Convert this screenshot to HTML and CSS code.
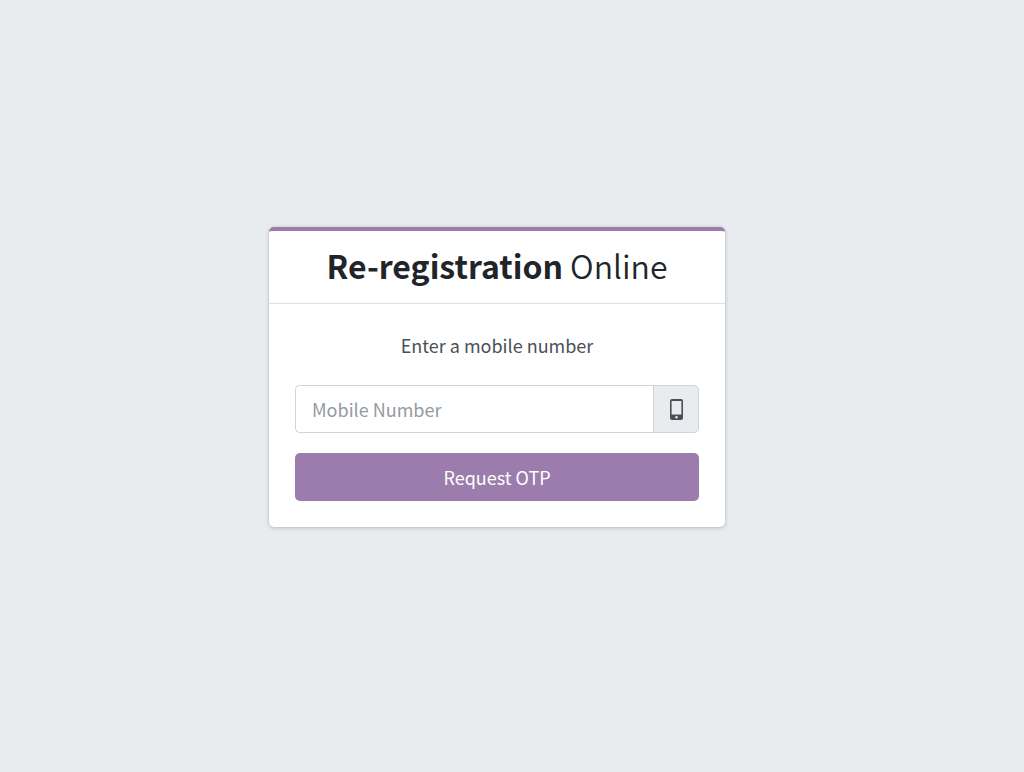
FILE: index.html
```html
<!DOCTYPE html>
<html lang="en">

<head>
    <meta charset="UTF-8">
    <meta name="viewport" content="width=device-width, initial-scale=1.0">
    <title>Re-registration Online</title>
    <link rel="stylesheet" href="styles.css">
</head>

<body>
    <main class="login-box">
        <div class="card-header">
            <h1 class="title"><b>Re-registration</b> Online</h1>
        </div>
        <form class="card-body">
            <label class="login-msg" for="mobile">Enter a mobile number</label>
            <div class="input-group">
                <input type="tel" id="mobile" name="mobile" placeholder="Mobile Number">
                <span class="input-icon">
                    <svg width="13" height="21" viewBox="0 0 13 21" aria-hidden="true">
                        <path fill="currentColor" fill-rule="evenodd" d="M2 0h9a2 2 0 0 1 2 2v17a2 2 0 0 1-2 2H2a2 2 0 0 1-2-2V2A2 2 0 0 1 2 0zM1.600 2v13.500h9.800V2zM6.500 16.900a1.300 1.300 0 1 0 0 2.600 1.300 1.300 0 0 0 0-2.600z"/>
                    </svg>
                </span>
            </div>
            <button type="submit" class="btn">Request OTP</button>
        </form>
    </main>
</body>

</html>
```
FILE: styles.css
```css
* {
    box-sizing: border-box;
}

body {
    margin: 0;
    min-height: 100vh;
    padding: 0 30px 18px 0;
    display: flex;
    justify-content: center;
    align-items: center;
    background-color: #e9ecef;
    color: #212529;
    font-family: 'Source Sans Pro', 'Noto Sans CJK SC', sans-serif;
    font-size: 18px;
    line-height: 30px;
}

.login-box {
    width: 90%;
    max-width: 456px;
    background-color: #fff;
    border-top: 4px solid #9b7cad;
    border-radius: 5px;
    box-shadow: 0 0 1px rgba(0, 0, 0, 0.2), 0 1px 4px rgba(0, 0, 0, 0.2);
}

.card-header {
    padding: 10px 24px 14px;
    border-bottom: 1px solid #dfdfdf;
    text-align: center;
}

.title {
    margin: 0;
    font-size: 32px;
    font-weight: 350;
    line-height: 48px;
}

.title b {
    font-weight: 700;
}

.card-body {
    padding: 26px;
    display: flex;
    flex-direction: column;
}

.login-msg {
    margin-bottom: 25px;
    color: #495057;
    text-align: center;
}

.input-group {
    display: flex;
    height: 48px;
    margin-bottom: 20px;
}

.input-group input {
    flex: 1;
    min-width: 0;
    padding: 0 16px;
    border: 1px solid #ced4da;
    border-right: none;
    border-radius: 5px 0 0 5px;
    background-color: #fff;
    color: #495057;
    font: inherit;
}

.input-group input::placeholder {
    color: #939ba2;
    opacity: 1;
}

.input-icon {
    width: 46px;
    display: flex;
    justify-content: center;
    align-items: center;
    border: 1px solid #ced4da;
    border-radius: 0 5px 5px 0;
    background-color: #e9ecef;
    color: #495057;
}

.btn {
    height: 48px;
    border: none;
    border-radius: 5px;
    background-color: #9b7cad;
    color: #fff;
    font: inherit;
    cursor: pointer;
}
```
